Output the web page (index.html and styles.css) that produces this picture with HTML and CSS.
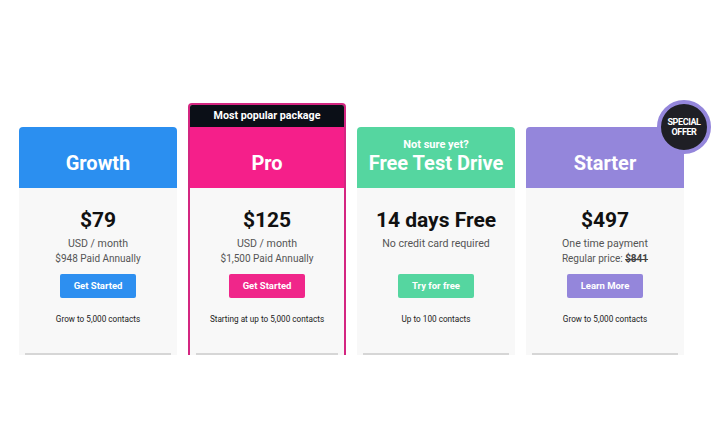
FILE: index.html
```html
<!DOCTYPE html>
<html>
<head>
<meta charset="utf-8">
<link rel="stylesheet" href="styles.css">
</head>
<body>
<div class="plans">
  <div class="card growth">
    <div class="head"><div class="title">Growth</div></div>
    <div class="body">
      <div class="info">
        <div class="price">$79</div>
        <div class="per">USD / month</div>
        <div class="annual">$948 Paid Annually</div>
      </div>
      <a class="btn">Get Started</a>
      <div class="contacts">Grow to 5,000 contacts</div>
      <div class="foot"></div>
    </div>
  </div>
  <div class="card pro">
    <div class="label">Most popular package</div>
    <div class="head"><div class="title">Pro</div></div>
    <div class="body">
      <div class="info">
        <div class="price">$125</div>
        <div class="per">USD / month</div>
        <div class="annual">$1,500 Paid Annually</div>
      </div>
      <a class="btn">Get Started</a>
      <div class="contacts">Starting at up to 5,000 contacts</div>
      <div class="foot"></div>
    </div>
  </div>
  <div class="card trial">
    <div class="head"><div class="sub">Not sure yet?</div><div class="title">Free Test Drive</div></div>
    <div class="body">
      <div class="info">
        <div class="price">14 days Free</div>
        <div class="per">No credit card required</div>
      </div>
      <a class="btn">Try for free</a>
      <div class="contacts">Up to 100 contacts</div>
      <div class="foot"></div>
    </div>
  </div>
  <div class="card starter">
    <div class="badge"><span>SPECIAL<br>OFFER</span></div>
    <div class="head"><div class="title">Starter</div></div>
    <div class="body">
      <div class="info">
        <div class="price">$497</div>
        <div class="per">One time payment</div>
        <div class="annual">Regular price: <s>$841</s></div>
      </div>
      <a class="btn">Learn More</a>
      <div class="contacts">Grow to 5,000 contacts</div>
      <div class="foot"></div>
    </div>
  </div>
</div>
</body>
</html>
```
FILE: styles.css
```css
* { box-sizing: border-box; }
html, body { margin: 0; background: #fff; }
body { font-family: Roboto, "Liberation Sans", Arial, sans-serif; }
.plans {
  display: flex;
  align-items: flex-end;
  gap: 11px;
  padding: 103px 0 0 19px;
}
.card {
  position: relative;
  width: 158px;
  display: flex;
  flex-direction: column;
}
.head {
  height: 61px;
  border-radius: 4px 4px 0 0;
  display: flex;
  flex-direction: column;
  justify-content: flex-end;
  align-items: center;
  padding-bottom: 13px;
  color: #fff;
}
.title { font-size: 20px; line-height: 24px; font-weight: 700; }
.sub { font-size: 11px; line-height: 12px; font-weight: 700; }
.growth .head { background: #2b8ff0; }
.pro .head { background: #f51f8a; border-radius: 0; }
.trial .head { background: #55d6a0; }
.starter .head { background: #9486db; }
.body {
  height: 167px;
  background: #f8f8f8;
  display: flex;
  flex-direction: column;
  align-items: center;
  padding-top: 19px;
  text-align: center;
}
.info { height: 59px; }
.price { font-size: 21px; line-height: 26px; font-weight: 700; color: #111; margin-bottom: 3px; }
.per { font-size: 10.6px; line-height: 15px; color: #555; }
.annual { font-size: 10px; line-height: 15px; color: #555; }
.annual s { font-weight: 700; color: #444; }
.btn {
  display: block;
  margin-top: 8px;
  width: 76px;
  height: 24px;
  line-height: 24px;
  border-radius: 2px;
  color: #fff;
  font-size: 9.5px;
  font-weight: 700;
  text-align: center;
}
.growth .btn { background: #2d8ff0; }
.pro .btn { background: #f0268a; }
.trial .btn { background: #55d6a0; }
.starter .btn { background: #9486db; }
.contacts { margin-top: 15px; font-size: 8.2px; line-height: 12px; color: #222; }
.foot {
  margin-top: auto;
  align-self: stretch;
  margin-left: 6px;
  margin-right: 6px;
  height: 2px;
  background: #d6d6d6;
}
.pro {
  border: 2px solid #d42681;
  border-bottom: none;
  border-radius: 4px 4px 0 0;
}
.label {
  height: 22px;
  background: #0b0f17;
  color: #fff;
  font-size: 10.7px;
  font-weight: 700;
  line-height: 22px;
  text-align: center;
  border-radius: 2px 2px 0 0;
}
.badge {
  position: absolute;
  top: -27px;
  right: -27px;
  width: 54px;
  height: 54px;
  border-radius: 50%;
  background: #1f1f25;
  border: 4px solid #9486db;
  display: flex;
  align-items: center;
  justify-content: center;
  text-align: center;
  color: #fff;
  font-size: 9px;
  line-height: 10px;
  font-weight: 700;
  letter-spacing: -0.4px;
}
```
